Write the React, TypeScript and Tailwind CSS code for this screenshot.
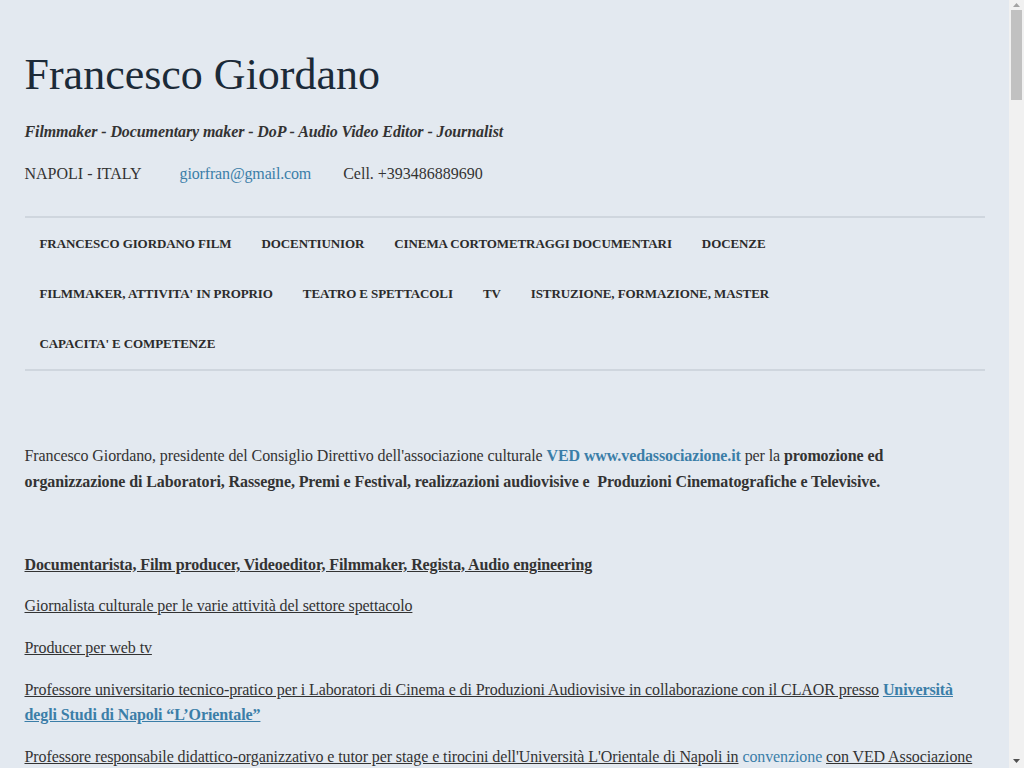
const NAV = [
  "Francesco Giordano Film",
  "Docentiunior",
  "Cinema Cortometraggi Documentari",
  "Docenze",
  "Filmmaker, attivita' in proprio",
  "Teatro e spettacoli",
  "TV",
  "Istruzione, formazione, master",
  "Capacita' e competenze",
];

const EXTRA = [
  "Direttore artistico di rassegne cinematografiche e festival dedicati al cortometraggio e al documentario",
  "Docente di linguaggio audiovisivo, montaggio e ripresa nei laboratori per le scuole secondarie",
  "Operatore di ripresa e direttore della fotografia per produzioni indipendenti",
  "Montatore audio video per documentari, spot, videoclip e programmi televisivi",
];

function Scrollbar() {
  return (
    <div className="flex h-screen w-[15px] shrink-0 flex-col bg-[#f1f1f1]">
      <div className="flex h-[10px] items-center justify-center">
        <svg width="7" height="4" viewBox="0 0 7 4">
          <path d="M0 4 L3.5 0 L7 4 Z" fill="#a3a3a3" />
        </svg>
      </div>
      <div className="mx-[2px] h-[90px] bg-[#c1c1c1]" />
      <div className="flex-1" />
      <div className="flex h-[15px] items-center justify-center">
        <svg width="7" height="4" viewBox="0 0 7 4">
          <path d="M0 0 L7 0 L3.5 4 Z" fill="#505050" />
        </svg>
      </div>
    </div>
  );
}

export default function App() {
  return (
    <div className="flex h-screen overflow-hidden bg-[#e3e9f0] font-['Liberation_Serif','Times_New_Roman',serif] text-[16px] text-[#333]">
      <div className="min-w-0 flex-1 overflow-hidden">
        <div className="mx-auto w-[960px] pb-24">
          <header className="pt-[48px]">
            <h1 className="text-[44px] leading-[54px] text-[#1b2a38]">Francesco Giordano</h1>
            <p className="mt-[17px] text-[16px] font-bold italic leading-[26px] tracking-[-0.1px] text-[#333]">
              Filmmaker - Documentary maker - DoP - Audio Video Editor - Journalist
            </p>
            <div className="mt-[16px] flex leading-[26px]">
              <span>NAPOLI - ITALY</span>
              <a className="ml-[38px] tracking-[-0.15px] text-[#3b7ea8]">giorfran@gmail.com</a>
              <span className="ml-[32px]">Cell. +393486889690</span>
            </div>
          </header>

          <nav className="mt-[29px] border-y-2 border-[#cfd6de] pt-[1px]">
            <ul className="flex flex-wrap">
              {NAV.map((item) => (
                <li
                  key={item}
                  className="px-[15px] py-[12px] text-[13px] font-bold uppercase leading-[26px] tracking-[-0.1px] text-[#2b2b2b]"
                >
                  {item}
                </li>
              ))}
            </ul>
          </nav>

          <main className="pt-[72px] leading-[1.6] tracking-[-0.1px]">
            <p>
              Francesco Giordano, presidente del Consiglio Direttivo dell'associazione culturale{" "}
              <a className="font-bold text-[#3b7ea8]">VED www.vedassociazione.it</a> per la{" "}
              <strong>
                promozione ed organizzazione di Laboratori, Rassegne, Premi e Festival, realizzazioni audiovisive e&nbsp; Produzioni Cinematografiche e Televisive.
              </strong>
            </p>
            <p className="mt-[16px]">&nbsp;</p>
            <p className="mt-[16px] font-bold underline">
              Documentarista, Film producer, Videoeditor, Filmmaker, Regista, Audio engineering
            </p>
            <p className="mt-[16px] underline">Giornalista culturale per le varie attività del settore spettacolo</p>
            <p className="mt-[16px] underline">Producer per web tv</p>
            <p className="mt-[16px]">
              <span className="underline">
                Professore universitario tecnico-pratico per i Laboratori di Cinema e di Produzioni Audiovisive in collaborazione con il CLAOR presso
              </span>{" "}
              <a className="font-bold text-[#3b7ea8] underline">Università degli Studi di Napoli “L’Orientale”</a>
            </p>
            <p className="mt-[16px]">
              <span className="underline">
                Professore responsabile didattico-organizzativo e tutor per stage e tirocini dell'Università L'Orientale di Napoli in
              </span>{" "}
              <a className="text-[#3b7ea8]">convenzione</a> <span className="underline">con VED Associazione culturale</span>
            </p>
            {EXTRA.map((line) => (
              <p key={line} className="mt-[16px] underline">
                {line}
              </p>
            ))}
          </main>
        </div>
      </div>
      <Scrollbar />
    </div>
  );
}
